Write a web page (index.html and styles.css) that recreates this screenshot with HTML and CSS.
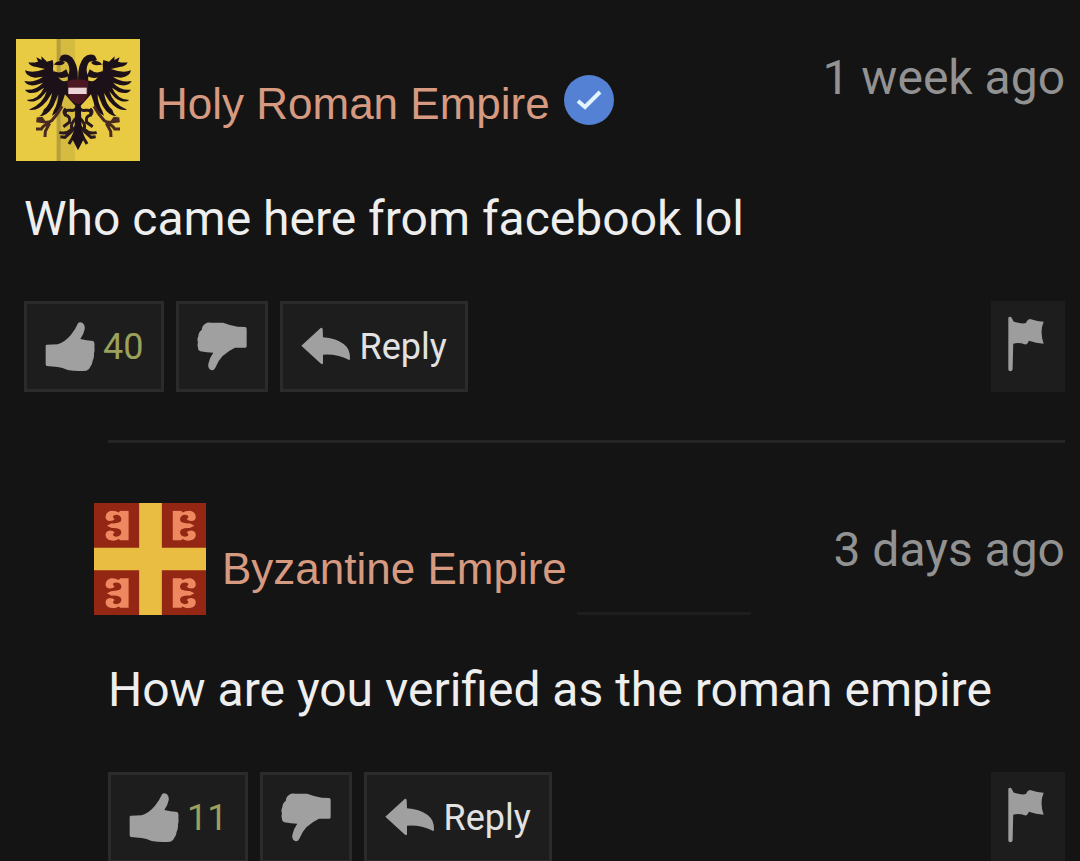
FILE: index.html
```
<!DOCTYPE html>
<html lang="en">
<head>
    <meta charset="UTF-8">
    <meta name="viewport" content="width=device-width, initial-scale=1.0">
    <title>Comments</title>
    <link rel="stylesheet" href="styles.css">
</head>
<body>

    <!-- Shared icons -->
    <svg class="sprite" aria-hidden="true">
        <symbol id="icon-like" viewBox="0 0 150 150">
            <path d="M2 72 Q2 68 6 68 L38 67 Q62 58 78 38 Q92 21 99 4 Q104 -2 113 3 Q121 9 119 22 Q116 38 106 51 Q124 55 145 57 Q150 61 148 75 Q150 85 147 94 Q148 108 143 116 Q142 128 136 134 Q133 144 124 146 Q95 149 68 144 Q52 137 38 135 L5 132 Q2 131 2 127 Z"/>
        </symbol>
        <symbol id="icon-dislike" viewBox="0 0 150 150">
            <path d="M25 5 Q30 1 42 2 L78 2 Q102 11 122 14 L145 15 Q149 16 149 21 L149 73 Q149 77 145 77 L114 77 Q94 86 76 103 Q63 117 55 137 Q50 147 42 144 Q32 140 34 126 Q38 106 49 92 Q30 92 10 88 Q2 86 3 76 Q0 70 3 61 Q-1 52 4 43 Q4 31 14 24 Q16 9 25 5 Z"/>
        </symbol>
        <symbol id="icon-reply" viewBox="0 0 150 120">
            <path d="M1 56 L59 3 Q65 1 65 7 L66 31 Q103 33 128 51 Q149 67 147 96 Q146 101 140 97 Q107 80 66 83 L66 107 Q66 114 60 110 Z"/>
        </symbol>
        <symbol id="icon-flag" viewBox="0 0 110 170">
            <path d="M1 4 Q7 -2 12 6 L17 16 Q39 25 55 21 Q60 8 70 9 Q90 16 109 17 Q96 47 109 84 Q85 82 64 75 Q59 88 51 86 Q33 79 16 84 L14 163 Q13 168 7 168 Q1 168 1 162 Z"/>
        </symbol>
        <!-- One firesteel, reused in the four quarters of the flag -->
        <symbol id="firesteel" viewBox="0 0 72 90">
            <path d="M2 1 H27 L31 6 Q42 -1 55 1 Q69 5 70 19 Q69 31 57 31 Q47 31 43 25 Q51 21 46 15 Q36 10 27 17 Q20 26 27 34 Q38 39 52 38 L66 45 L52 52 Q38 51 27 56 Q20 64 27 73 Q36 80 46 75 Q51 69 43 65 Q47 59 57 59 Q69 60 70 72 Q69 85 55 88 Q42 91 31 84 L27 88 H2 Z"/>
        </symbol>
    </svg>

    <main class="comments">
        <!-- First comment -->
        <article class="comment">
            <header class="comment-header">
                <svg class="avatar" viewBox="18 28 372 366" role="img" aria-label="Holy Roman Empire">
                    <rect class="eagle-field" x="18" y="28" width="372" height="366"/>
                    <rect class="eagle-fold" x="140" y="28" width="55" height="366"/>
                    <rect class="eagle-crease" x="140" y="28" width="12" height="366"/>
                    <g id="eagle-half" class="eagle">
                        <!-- head and neck -->
                        <path d="M204 155 L203 128 Q201 103 187 84 Q171 69 153 78 L147 91 L158 96 Q169 91 174 102 Q183 123 173 139 L174 163 L204 200 Z"/>
                        <path d="M154 93 Q136 94 132 105 L150 107 Q160 106 165 99 Z"/>
                        <path d="M169 119 Q151 134 132 125 L124 132 L145 143 Q158 148 177 139 Z"/>
                        <!-- wing feathers -->
                        <path d="M179 151 Q154 161 145 142 Q125 132 130 104 L128 91 L111 96 L94 80 L95 91 L79 83 L84 96 Q69 100 55 98 Q60 111 79 112 L105 118 Q68 132 45 122 Q48 141 75 144 L99 141 Q73 160 43 154 Q52 171 78 166 L99 159 Q76 184 45 180 Q55 196 82 187 L102 174 Q85 211 50 211 Q66 223 93 204 L110 185 Q99 224 57 240 Q84 246 111 213 L126 190 Q121 225 101 240 Q97 258 84 260 Q111 261 130 229 L145 194 Q146 219 131 243 L126 258 Q154 247 157 218 L165 194 L180 211 L196 228 L204 220 V158 Z"/>
                        <!-- leg and claw -->
                        <path class="claw" d="M156 230 Q143 254 125 273 Q115 281 101 276 L79 273 M120 279 Q101 286 94 298 L78 298 M119 281 L106 305 L105 322 M102 276 L95 266 L80 268"/>
                        <path class="tail" d="M204 225 Q199 246 181 242 Q163 239 166 256 Q183 260 178 278 L160 291 M201 263 Q180 280 185 299 Q169 315 148 308 M200 288 Q185 306 165 323 L151 321 M203 301 L182 334 L177 343 M166 256 Q158 246 168 237"/>
                    </g>
                    <use href="#eagle-half" transform="matrix(-1 0 0 1 408 0)"/>
                    <path class="eagle" d="M196 220 H212 L215 298 L224 323 L204 362 L184 323 L194 298 Z"/>
                    <path class="shield" d="M172 155 Q204 143 235 155 L233 194 Q228 216 204 224 Q180 216 174 194 Z"/>
                    <rect class="shield-bar" x="175" y="174" width="55" height="19"/>
                </svg>
                <a class="author" href="#">Holy Roman Empire</a>
                <svg class="verified" viewBox="0 0 50 50" role="img" aria-label="Verified">
                    <circle cx="25" cy="25" r="25"/>
                    <path d="M14 26 L21 32 L36 17"/>
                </svg>
                <time class="date">1 week ago</time>
            </header>
            <p class="comment-text">Who came here from facebook lol</p>
            <div class="actions">
                <button class="btn" type="button" aria-label="Like, 40">
                    <svg class="icon"><use href="#icon-like"/></svg>
                    <span class="votes">40</span>
                </button>
                <button class="btn" type="button" aria-label="Dislike">
                    <svg class="icon"><use href="#icon-dislike"/></svg>
                </button>
                <button class="btn" type="button">
                    <svg class="icon icon-reply"><use href="#icon-reply"/></svg>
                    <span>Reply</span>
                </button>
                <button class="btn btn-flag" type="button" aria-label="Report">
                    <svg class="icon-flag"><use href="#icon-flag"/></svg>
                </button>
            </div>
        </article>

        <!-- Reply -->
        <article class="comment reply">
            <header class="comment-header">
                <svg class="avatar" viewBox="0 0 330 330" role="img" aria-label="Byzantine Empire">
                    <rect class="flag-red" width="330" height="330"/>
                    <path class="flag-cross" d="M133 0 H200 V132 H330 V198 H200 V330 H133 V198 H0 V132 H133 Z"/>
                    <g class="firesteels">
                        <use href="#firesteel" width="72" height="90" transform="translate(104 22) scale(-1 1)"/>
                        <use href="#firesteel" width="72" height="90" transform="translate(230 22)"/>
                        <use href="#firesteel" width="72" height="90" transform="translate(104 221) scale(-1 1)"/>
                        <use href="#firesteel" width="72" height="90" transform="translate(230 221)"/>
                    </g>
                </svg>
                <a class="author" href="#">Byzantine Empire</a>
                <span class="name-line"></span>
                <time class="date">3 days ago</time>
            </header>
            <p class="comment-text">How are you verified as the roman empire</p>
            <div class="actions">
                <button class="btn" type="button" aria-label="Like, 11">
                    <svg class="icon"><use href="#icon-like"/></svg>
                    <span class="votes">11</span>
                </button>
                <button class="btn" type="button" aria-label="Dislike">
                    <svg class="icon"><use href="#icon-dislike"/></svg>
                </button>
                <button class="btn" type="button">
                    <svg class="icon icon-reply"><use href="#icon-reply"/></svg>
                    <span>Reply</span>
                </button>
                <button class="btn btn-flag" type="button" aria-label="Report">
                    <svg class="icon-flag"><use href="#icon-flag"/></svg>
                </button>
            </div>
        </article>
    </main>

</body>
</html>
```

FILE: styles.css
```
* {
    box-sizing: border-box;
}

body {
    margin: 0;
    height: 100vh;
    overflow: hidden;
    background-color: #141414;
    color: #eeeeee;
    font-family: Roboto, sans-serif;
}

.sprite {
    display: none;
}

.comments {
    padding: 39px 15px 0 24px;
}

.comment-header {
    display: flex;
    align-items: center;
    margin-left: -8px;
}

.avatar {
    width: 124px;
    height: 122px;
    margin-right: 16px;
    flex-shrink: 0;
}

.author {
    padding-top: 8px;
    color: #d69a80;
    font-family: "Liberation Sans", Arial, sans-serif;
    font-size: 44px;
    line-height: 48px;
    text-decoration: none;
    white-space: nowrap;
}

.verified {
    width: 50px;
    height: 50px;
    margin-left: 14px;
    fill: #5481d4;
}

.verified path {
    fill: none;
    stroke: #e2f4ff;
    stroke-width: 4;
}

.date {
    align-self: flex-start;
    margin-left: auto;
    padding-top: 12px;
    color: #929292;
    font-size: 48px;
    line-height: 54px;
    white-space: nowrap;
}

.comment-text {
    margin: 28px 0 52px;
    font-size: 48px;
    line-height: 60px;
}

/* Buttons */
.actions {
    display: flex;
    gap: 12px;
}

.btn {
    display: flex;
    align-items: center;
    gap: 8px;
    height: 91px;
    padding: 0 18px;
    border: 3px solid #2b2b2b;
    background-color: #1d1d1d;
    color: #e2e2e2;
    font-family: inherit;
    font-size: 36px;
    line-height: 44px;
    cursor: pointer;
}

.btn:hover {
    background-color: #252525;
}

.icon {
    width: 50px;
    height: 50px;
    fill: #a0a0a0;
}

.icon-reply {
    height: 40px;
}

.votes {
    color: #9ba05c;
}

.btn-flag {
    width: 74px;
    margin-left: auto;
    border-color: #1d1d1d;
    padding: 0 14px;
}

.icon-flag {
    width: 36px;
    height: 56px;
    margin-bottom: 6px;
    fill: #9d9d9d;
}

/* Nested reply */
.reply {
    margin: 48px 0 0 84px;
    padding-top: 60px;
    border-top: 3px solid #252525;
}

.reply .comment-header {
    margin-left: -14px;
}

.reply .avatar {
    width: 112px;
    height: 112px;
}

.reply .author {
    padding-top: 20px;
}

.reply .date {
    padding-top: 20px;
}

.reply .comment-text {
    margin-top: 45px;
}

.name-line {
    align-self: flex-end;
    width: 174px;
    height: 3px;
    margin-left: 10px;
    background-color: #1e1e1e;
}

/* Holy Roman Empire avatar */
.eagle-field {
    fill: #e9cb43;
}

.eagle-fold {
    fill: #ad973f;
    opacity: 0.3;
}

.eagle-crease {
    fill: #86763b;
    opacity: 0.4;
}

.eagle {
    fill: #1d1119;
}

.claw,
.tail {
    fill: none;
    stroke: #482a20;
    stroke-width: 9;
}

.tail {
    stroke: #291a1b;
}

.shield {
    fill: #4c1723;
}

.shield-bar {
    fill: #ead4d8;
}

/* Byzantine Empire avatar */
.flag-red {
    fill: #932713;
}

.flag-cross {
    fill: #e8bd42;
}

.firesteels {
    fill: #ed8861;
}
```
